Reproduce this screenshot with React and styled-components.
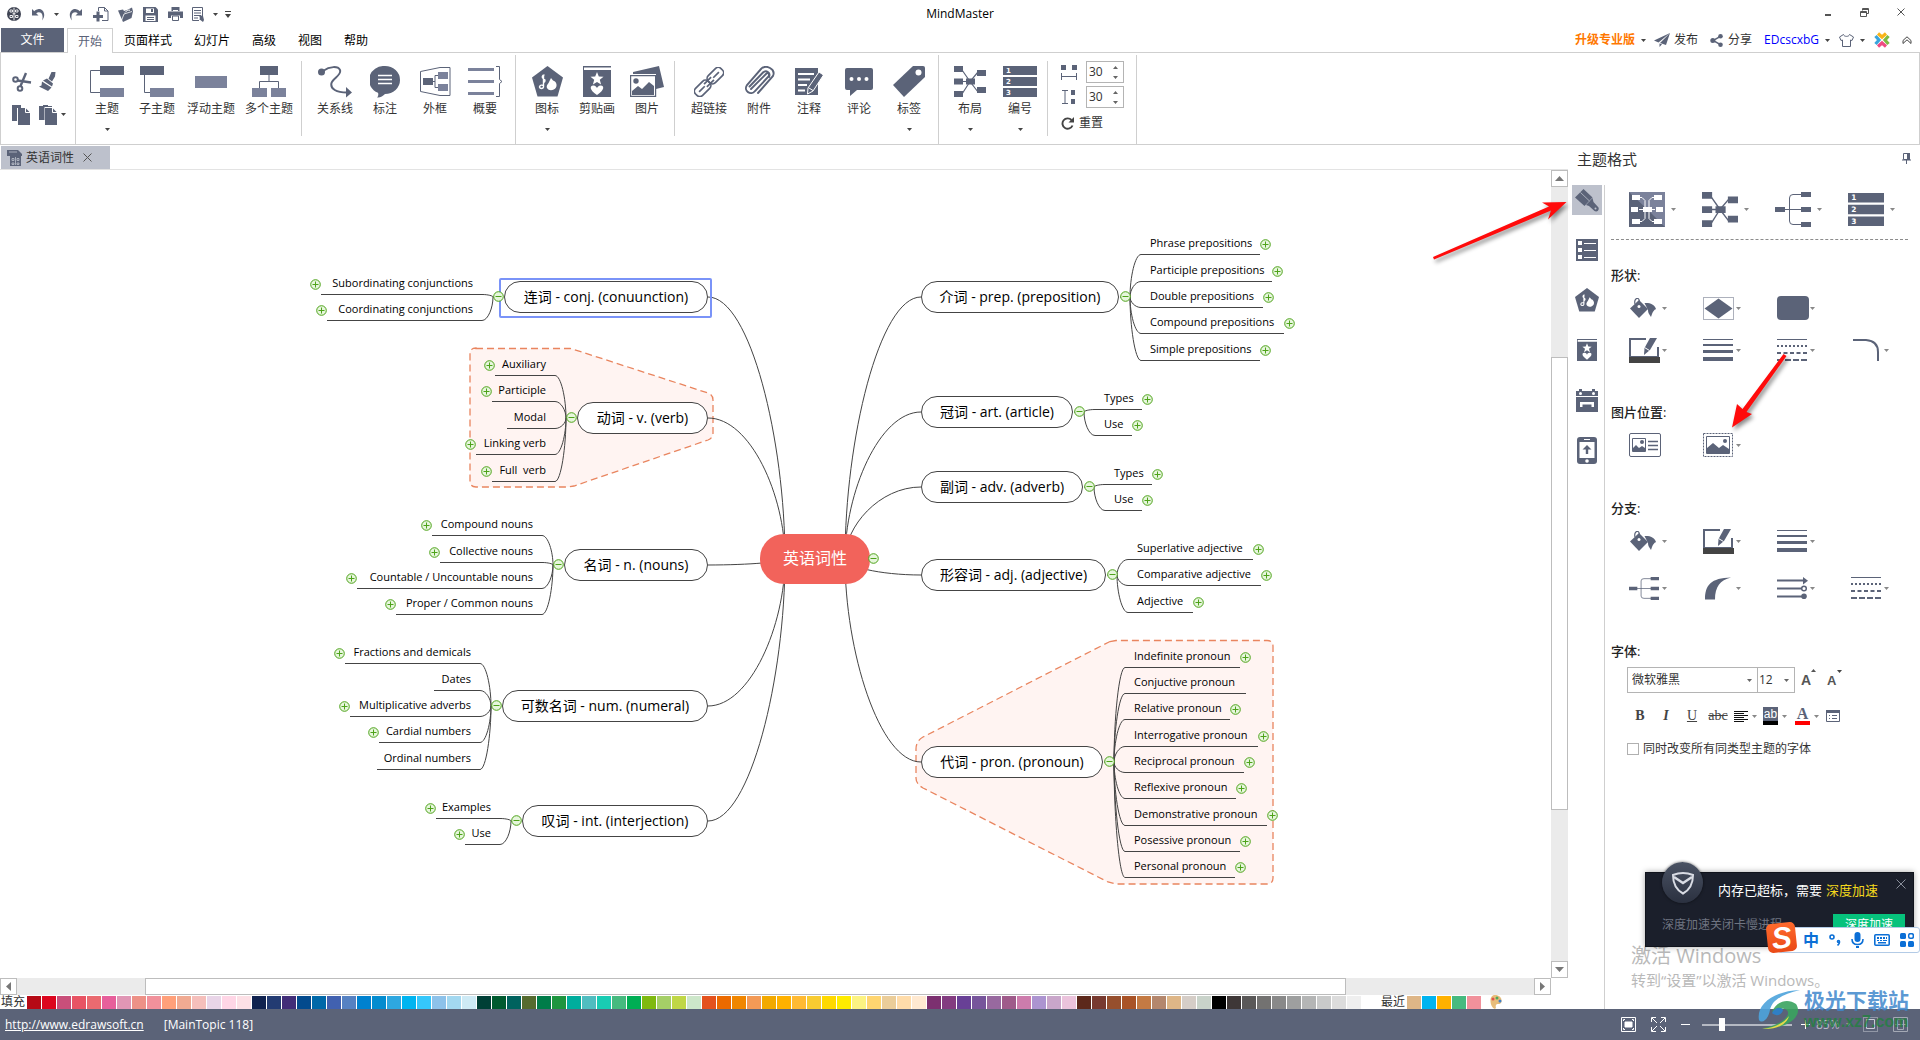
import React, { useState } from 'react';
import styled, { createGlobalStyle, css } from 'styled-components';

const DARK = '#5b6378';
const LIGHT = '#7b829b';
const LINE = '#cfcfcf';
const INK = '#444444';

const GlobalStyle = createGlobalStyle`
  * { box-sizing: border-box; }
  body {
    margin: 0;
    background: #fff;
    color: #333;
    font-family: "Open Sans", "Noto Sans CJK SC", sans-serif;
    font-size: 12px;
    line-height: 16px;
  }
  button, input, select { font: inherit; color: inherit; }
  svg { display: block; flex: none; }
`

const plainButton = css`
  border: 0;
  padding: 0;
  margin: 0;
  background: none;
  cursor: default;
`

const Page = styled.div`
  position: relative;
  display: flex;
  flex-direction: column;
  min-height: 100vh;
  overflow: hidden;
`

const IconButton = styled.button`
  ${plainButton}
  display: flex;
  align-items: center;
  justify-content: center;
  gap: ${p => p.$gap || 0}px;
  width: ${p => p.$w ? p.$w + 'px' : 'auto'};
  height: ${p => p.$h || 20}px;
`

/* ---------- title bar ---------- */

const TitleBar = styled.header`
  display: grid;
  grid-template-columns: 1fr auto 1fr;
  align-items: center;
  height: 28px;
  color: #000;
`

const QuickAccess = styled.div`
  display: flex;
  align-items: center;
  padding-left: 2px;
`

const WindowButtons = styled.div`
  display: flex;
  justify-content: flex-end;
  padding-bottom: 4px;
`

/* ---------- tabs ---------- */

const TabRow = styled.nav`
  display: flex;
  align-items: stretch;
  height: 24px;
  padding-left: 1px;
`

const FileTab = styled.button`
  ${plainButton}
  width: 63px;
  margin-right: 3px;
  background: ${DARK};
  color: #fff;
`

const Tab = styled.button`
  ${plainButton}
  padding: 2px ${p => p.$active ? 10 : 11}px 0;
  color: ${p => p.$active ? DARK : '#000'};
  ${p => p.$active && css`
    position: relative;
    z-index: 1;
    margin-bottom: -1px;
    background: #fff;
    border: 1px solid ${LINE};
    border-bottom: 0;
  `}
`

const AccountBar = styled.div`
  display: flex;
  align-items: center;
  margin-left: auto;
  padding-right: 6px;
`

const Account = styled.button`
  ${plainButton}
  display: flex;
  align-items: center;
  gap: ${p => p.$gap || 6}px;
  margin-right: ${p => p.$after || 0}px;
  color: ${p => p.$color || '#333'};
  font-weight: ${p => p.$bold ? 600 : 400};
`

/* ---------- ribbon ---------- */

const Ribbon = styled.div`
  display: flex;
  height: 93px;
  border: 1px solid ${LINE};
`

const Group = styled.div`
  display: flex;
  padding: 0 ${p => p.$pr || 4}px 0 ${p => p.$pl || 6}px;
  margin: ${p => p.$short ? 8 : 2}px 0 ${p => p.$short ? 8 : 0}px;
  border-right: 1px solid ${LINE};
`

const Clipboard = styled.div`
  display: grid;
  grid-template-columns: 27px 28px;
  grid-auto-rows: 33px;
  place-items: center start;
  width: 75px;
  padding: 10px 0 0 11px;
  margin-top: 2px;
  border-right: 1px solid ${LINE};
`

const BigButton = styled.button`
  ${plainButton}
  display: flex;
  flex-direction: column;
  align-items: center;
  width: ${p => p.$w || 50}px;
  margin-top: ${p => p.$short ? 3 : 9}px;
  span { line-height: 18px; margin: 3px 0 10px; }
`

const IconSlot = styled.div`
  display: flex;
  align-items: center;
  justify-content: center;
  height: 35px;
  margin-bottom: -2px;
`

const Spacing = styled.div`
  display: flex;
  flex-direction: column;
  gap: 3px;
  width: 88px;
  padding: 8px 0 0 13px;
`

const SpacingRow = styled.label`
  display: flex;
  align-items: center;
  justify-content: space-between;
  padding-right: 12px;
`

const ResetButton = styled.button`
  ${plainButton}
  display: flex;
  align-items: center;
  gap: 5px;
  margin-top: 4px;
`

const SpinBox = styled.span`
  display: flex;
  align-items: center;
  width: 38px;
  height: 22px;
  border: 1px solid #b4b4b4;
  input {
    width: 22px;
    padding: 0 0 0 2px;
    border: 0;
    outline: 0;
    background: none;
  }
`

const Divider = styled.div`
  width: 1px;
  margin-top: 2px;
  background: ${LINE};
`

/* ---------- work area ---------- */

const Main = styled.main`
  display: flex;
  flex: 1;
`

const Work = styled.div`
  display: flex;
  flex-direction: column;
  flex: 1;
  min-width: 0;
`

const DocTabs = styled.div`
  display: flex;
  height: 25px;
  padding: 1px 0 0 1px;
  border-bottom: 1px solid #e3e3e3;
`

const DocTab = styled.div`
  display: flex;
  align-items: center;
  gap: 3px;
  width: 109px;
  padding-left: 6px;
  background: #bdc1cc;
  button { ${plainButton} margin-left: 6px; }
`

const CanvasRow = styled.div`
  display: flex;
  flex: 1;
`

const Canvas = styled.section`
  position: relative;
  flex: 1;
  min-height: 760px;
  overflow: hidden;
  color: #000;
`

const Links = styled.svg`
  position: absolute;
  inset: 0;
`

const Topic = styled.div`
  position: absolute;
  left: ${p => p.$x}px;
  top: ${p => p.$y}px;
  width: ${p => p.$w}px;
  height: 32px;
  border: 1px solid ${INK};
  border-radius: 16px;
  background: #fff;
  font-size: 14px;
  line-height: 29px;
  text-align: center;
  white-space: nowrap;
  ${p => p.$selected && css`
    &::before {
      content: '';
      position: absolute;
      inset: -4px -5px -6px -6px;
      border: 2px solid #7a93f8;
      border-radius: 2px;
    }
  `}
`

const Root = styled.div`
  position: absolute;
  left: 760px;
  top: 364px;
  width: 110px;
  height: 50px;
  border-radius: 24px;
  background: #f2635b;
  color: #fff;
  font-size: 16px;
  line-height: 48px;
  text-align: center;
`

const Leaf = styled.div`
  position: absolute;
  left: ${p => p.$left ? p.$x - 220 : p.$x}px;
  top: ${p => p.$y - 20}px;
  width: 220px;
  line-height: 18px;
  font-size: 11px;
  text-align: ${p => p.$left ? 'right' : 'left'};
  white-space: pre;
`

const Toggle = styled.button`
  ${plainButton}
  position: absolute;
  left: ${p => p.$x - 5}px;
  top: ${p => p.$y - 5}px;
  width: 11px;
  height: 11px;
`

const VScroll = styled.div`
  display: flex;
  flex-direction: column;
  width: 17px;
  background: #ebebeb;
`

const HScroll = styled.div`
  display: flex;
  height: 17px;
  margin-right: 17px;
  background: #ebebeb;
`

const ScrollButton = styled.button`
  ${plainButton}
  display: flex;
  align-items: center;
  justify-content: center;
  width: 17px;
  height: 17px;
  border: 1px solid #bdbdbd;
  background: #fff;
`

const Track = styled.div`
  flex: ${p => p.$size};
`

const Thumb = styled.div`
  flex: ${p => p.$size};
  border: 1px solid #bdbdbd;
  background: #fff;
`

const PaletteBar = styled.div`
  display: flex;
  align-items: center;
  height: 14px;
  padding-left: 1px;
  line-height: 14px;
`

const PaletteLabel = styled.span`
  width: 26px;
  margin-left: ${p => p.$before || 0}px;
  white-space: nowrap;
`

const Swatch = styled.button`
  ${plainButton}
  width: 14px;
  height: 13px;
  margin-right: 1px;
  background: ${p => p.$color};
`

/* ---------- format panel ---------- */

const Panel = styled.aside`
  display: flex;
  flex-direction: column;
  width: 352px;
`

const PanelTitle = styled.div`
  display: flex;
  align-items: center;
  justify-content: space-between;
  height: 27px;
  margin-bottom: 13px;
  padding: 0 9px;
  font-size: 15px;
`

const PanelMain = styled.div`
  display: flex;
  flex: 1;
`

const SideTabs = styled.div`
  display: flex;
  flex: none;
  flex-direction: column;
  gap: 20px;
  width: 37px;
  padding-left: 4px;
  border-right: 1px solid ${LINE};
`

const SideTab = styled.button`
  ${plainButton}
  display: flex;
  align-items: center;
  justify-content: center;
  width: 30px;
  height: 30px;
  background: ${p => p.$active ? '#bdc1cc' : 'none'};
`

const Sections = styled.div`
  flex: 1;
  min-width: 0;
  padding: 0 12px 0 6px;
`

const StyleRow = styled.div`
  display: flex;
  align-items: flex-start;
  gap: 26px;
  height: 55px;
  padding: 7px 0 0 18px;
  border-bottom: 1px dashed #8c8c8c;
`

const Heading = styled.h3`
  margin: ${p => p.$top}px 0 0;
  height: 21px;
  font-size: 13px;
  font-weight: 500;
  line-height: 19px;
  color: #222;
`

const Tools = styled.div`
  display: grid;
  grid-template-columns: repeat(4, 74px);
  grid-auto-rows: 42px;
  row-gap: ${p => p.$gap || 0}px;
  padding-left: 18px;
`

const Tool = styled.button`
  ${plainButton}
  display: flex;
  flex: none;
  align-items: center;
  justify-content: space-between;
  width: ${p => p.$w || 38}px;
`

const FontRow = styled.div`
  display: flex;
  align-items: center;
  margin-top: 4px;
  padding-left: 16px;
`

const SelectBox = styled.span`
  display: flex;
  align-items: center;
  width: ${p => p.$w}px;
  height: 26px;
  padding-right: 5px;
  margin-right: -1px;
  border: 1px solid #b4b4b4;
  select {
    flex: 1;
    min-width: 0;
    padding-left: ${p => p.$pad}px;
    appearance: none;
    border: 0;
    outline: 0;
    background: none;
  }
`

const Letter = styled.button`
  ${plainButton}
  position: relative;
  width: 26px;
  margin-left: ${p => p.$first ? 7 : 0}px;
  text-align: left;
  font: bold ${p => p.$size}px "Liberation Sans", sans-serif;
  color: #555;
  svg { position: absolute; left: 10px; top: -3px; }
`

const FormatRow = styled.div`
  display: flex;
  align-items: center;
  height: 24px;
  margin-top: 11px;
  padding-left: 16px;
  color: #444;
`

const FormatButton = styled.button`
  ${plainButton}
  display: flex;
  align-items: center;
  justify-content: center;
  gap: 4px;
  width: ${p => p.$w || 26}px;
  height: 24px;
  font-family: "Liberation Serif", serif;
  font-size: 14px;
  font-weight: ${p => p.$bold ? 700 : 400};
  font-style: ${p => p.$italic ? 'italic' : 'normal'};
  text-decoration: ${p => p.$line || 'none'};
`

const ColorLetter = styled.span`
  width: 15px;
  height: 18px;
  border-bottom: 4px solid ${p => p.$color};
  background: ${p => p.$fill || 'none'};
  color: ${p => p.$fill ? '#fff' : DARK};
  font: ${p => p.$fill ? '12px "Liberation Sans"' : 'bold 16px "Liberation Serif"'}, sans-serif;
  line-height: 14px;
  text-align: center;
`

const CheckLabel = styled.label`
  display: flex;
  align-items: center;
  gap: 4px;
  margin-top: 13px;
  padding-left: 16px;
  input {
    appearance: none;
    width: 12px;
    height: 12px;
    margin: 0;
    border: 1px solid #b0b0b0;
    background: #fff;
  }
`

/* ---------- status bar ---------- */

const StatusBar = styled.footer`
  display: flex;
  align-items: center;
  height: 31px;
  padding: 0 5px;
  background: ${DARK};
  color: #fff;
  a { color: #fff; margin-right: 20px; }
`

const ZoomTools = styled.div`
  display: flex;
  align-items: center;
  margin-left: auto;
  span { width: 25px; margin-left: 6px; color: #b9bdc8; }
`

const Slider = styled.input`
  appearance: none;
  width: 90px;
  height: 14px;
  margin: 0 8px 0 5px;
  background: linear-gradient(#b5b9c3, #b5b9c3) center / 100% 2px no-repeat;
  &::-webkit-slider-thumb {
    appearance: none;
    width: 6px;
    height: 13px;
    background: #fff;
  }
`

/* ---------- floating windows ---------- */

const Pointer = styled.svg`
  position: absolute;
  top: ${p => p.$top}px;
  right: ${p => p.$right}px;
  filter: drop-shadow(2px 3px 2px rgba(0, 0, 0, 0.45));
`

const Activation = styled.div`
  position: absolute;
  right: 92px;
  bottom: 48px;
  width: 197px;
  color: #b9b9b9;
  white-space: nowrap;
  font-size: 15px;
  line-height: 24px;
  strong { display: block; font-weight: 400; font-size: 20px; }
`

const Notice = styled.div`
  position: absolute;
  right: 6px;
  bottom: 93px;
  width: 269px;
  height: 75px;
  padding: 8px 7px 0 16px;
  background: #1b1f2b;
  border: 1px solid #10131c;
  box-shadow: 0 0 6px rgba(0, 0, 0, 0.35);
  color: #fff;
`

const Badge = styled.div`
  position: absolute;
  left: 16px;
  top: -11px;
  display: flex;
  align-items: center;
  justify-content: center;
  width: 41px;
  height: 41px;
  border-radius: 50%;
  background: linear-gradient(#4a5263, #2b3140);
  box-shadow: 0 0 3px rgba(0, 0, 0, 0.6);
`

const NoticeTitle = styled.div`
  display: flex;
  gap: 4px;
  padding-left: 56px;
  font-size: 13px;
  line-height: 18px;
  em { font-style: normal; color: #f4d91c; }
  button { ${plainButton} margin: -12px 0 0 auto; }
`

const NoticeRow = styled.div`
  display: flex;
  justify-content: space-between;
  margin-top: 15px;
  color: #6f7481;
  line-height: 22px;
  button {
    ${plainButton}
    width: 72px;
    height: 22px;
    margin-right: 1px;
    background: #06c27c;
    color: #fff;
  }
`

const InputBar = styled.div`
  position: absolute;
  right: 0;
  bottom: 87px;
  display: flex;
  align-items: center;
  justify-content: space-between;
  width: 142px;
  height: 26px;
  padding: 0 5px 0 24px;
  border: 1px solid #b3cbe6;
  border-radius: 3px;
  background: #fff;
  color: #0b6fd6;
  font-size: 16px;
  font-weight: 700;
  line-height: 22px;
`

const InputLogo = styled.div`
  position: absolute;
  left: -12px;
  top: -5px;
  width: 29px;
  height: 29px;
  border-radius: 5px;
  background: linear-gradient(#ff6a2c, #ea4a17);
  color: #fff;
  font: italic bold 30px/29px "Liberation Sans", sans-serif;
  text-align: center;
  rotate: -6deg;
`

const SiteMark = styled.div`
  position: absolute;
  right: 12px;
  bottom: 8px;
  display: flex;
  align-items: center;
  gap: 2px;
  font-weight: 700;
  font-size: 21px;
  line-height: 24px;
  color: rgba(62, 135, 204, 0.85);
  white-space: nowrap;
  div { width: 104px; }
  small {
    display: block;
    font: bold 16px/20px "Liberation Sans", sans-serif;
    color: rgba(30, 130, 60, 0.75);
  }
`

/* ---------- icons ---------- */

const Icon = ({ w, h, children, ...rest }) => (
  <svg width={w} height={h} viewBox={`0 0 ${w} ${h}`} fill={DARK} stroke="none" aria-hidden="true" {...rest}>{children}</svg>
);

const Caret = ({ color = '#444' }) => <Icon w={5} h={3} fill={color}><path d="M0 0h5L2.500 3z" /></Icon>;

const CaretUp = () => <Icon w={5} h={3} fill="#555"><path d="M0 3h5L2.500 0z" /></Icon>;

const LogoIcon = () => (
  <Icon w={16} h={16} fill="#3f4453">
    <circle cx="8" cy="8" r="7" />
    <path d="M4 4h2.500v2H4zM9.500 4H12v2H9.500zM4 9.500h2.500v2H4zM9.500 9.500H12v2H9.500z" fill="none" stroke="#fff" strokeWidth=".9" />
    <path d="M6.500 7.800h3M8 1.500v13" stroke="#fff" strokeWidth=".9" />
  </Icon>
);

const UndoIcon = ({ flip }) => (
  <Icon w={14} h={13}>
    <g transform={flip ? 'translate(14 0) scale(-1 1)' : undefined}>
      <path d="M0 1v6.500h6.500L4.200 5.200C7.500 3 12.300 5 10 12.500 14.800 7 11 .2 6 1.200 4.500 1.500 3 2.300 2.300 3.200z" />
    </g>
  </Icon>
);

const NewIcon = () => (
  <Icon w={16} h={16}>
    <path d="M5.500 5V1.500h6l3.500 3.500v9.500H9M11.500 1.500V5H15" fill="none" stroke={DARK} />
    <path d="M3.500 5.500h3V9H10v3H6.500v3.500h-3V12H0V9h3.500z" />
  </Icon>
);

const OpenIcon = () => (
  <Icon w={15} h={15}>
    <path d="M0 3.500l5-1 1 1.500 3-1 5-2.500 1 4-1.500 6.500L5 15z" />
    <path d="M3.500 13.500L6 7l8-2.500" stroke="#fff" strokeWidth=".8" fill="none" /><path d="M7 5.500c1.500-2 3-2.500 5-2.300" stroke="#fff" fill="none" />
  </Icon>
);

const SaveIcon = () => (
  <Icon w={15} h={15}>
    <path d="M0 0h12.500L15 2.500V15H0z" /><path d="M3 1.500h8V6H3zM2.500 8.500h10v5.500h-10z" fill="#fff" /><path d="M8 2h2v3H8zM4 10h7v1H4zM4 12h7v1H4z" />
  </Icon>
);

const PrintIcon = () => (
  <Icon w={15} h={14}>
    <path d="M3.500 0h8v4h-8zM0 4.500h15V11h-3V8.500H3V11H0z" /><path d="M4.500 9h6v4.500h-6z" fill="#fff" stroke={DARK} /><path d="M5 3h5v1H5z" fill="#fff" />
  </Icon>
);

const PageIcon = () => (
  <Icon w={14} h={15}>
    <path d="M.5.500h10v9M7 13.500H.500V.500" fill="none" stroke={DARK} /><path d="M2 3h7v1H2zM2 5.500h7v1H2zM2 8h7v1H2zM2 10.500h4v1H2z" />
    <path d="M7 8l4 1 1 4-1 2-4-3 1-.5z" />
  </Icon>
);

const ScissorsIcon = () => (
  <Icon w={20} h={20} fill="none" stroke={DARK} strokeWidth="2">
    <circle cx="3.500" cy="7.500" r="2.300" /><circle cx="8" cy="16.500" r="2.300" />
    <path d="M5.500 8.500L19 10.500M8.500 14L14 1" strokeWidth="2.400" />
  </Icon>
);

const BrushIcon = () => (
  <Icon w={17} h={19}>
    <path d="M12.500 0h4l-.5 4.500-3 5-3.500-2.800zM4 8.500l4-2 6 5-1 3z" /><path d="M3 9.500l9.500 6-3.500 3.500-9-4.500 2.500-1z" />
  </Icon>
);

const CopyIcon = () => (
  <Icon w={18} h={20}>
    <path d="M0 0h9v3H5v13H0z" /><path d="M6 3h7.500L18 7.500V20H6z" /><path d="M13.500 3v4.500H18" fill="none" stroke="#fff" />
  </Icon>
);

const PasteIcon = () => (
  <Icon w={18} h={20}>
    <path d="M0 1h4V0h5v1h4v1H5.500v13H0z" /><path d="M6 3h7.500L18 7.500V20H6z" /><path d="M13.500 3v4.500H18" fill="none" stroke="#fff" />
  </Icon>
);

const ThemeIcon = () => (
  <Icon w={34} h={31}><path d="M10 4.500H.5v22H10" fill="none" stroke={DARK} /><path d="M10 0h24v9H10z" /><path d="M10 22h24v9H10z" fill={LIGHT} /></Icon>
);

const SubThemeIcon = () => (
  <Icon w={34} h={31}><path d="M0 0h24v9H0z" /><path d="M4.500 9v17.500H11" fill="none" stroke={DARK} /><path d="M10 22h24v9H10z" fill={LIGHT} /></Icon>
);

const FloatIcon = () => <Icon w={32} h={12}><path d="M0 0h32v12H0z" fill={LIGHT} /></Icon>;

const MultiIcon = () => (
  <Icon w={34} h={31}>
    <path d="M8 0h18v9H8z" /><path d="M17 9v6M7.500 22v-6.500h19V22" fill="none" stroke={DARK} /><path d="M0 22h15v9H0zM19 22h15v9H19z" fill={LIGHT} />
  </Icon>
);

const RelationIcon = () => (
  <Icon w={34} h={32}>
    <circle cx="3.500" cy="6" r="3.500" /><path d="M28 21v10.500l6-5z" />
    <path d="M5 5C12 0 20 0 22 4c2 5-7 8-8.500 13-1.500 6 5 9.500 15.500 9.500" fill="none" stroke={DARK} strokeWidth="2" />
  </Icon>
);

const CalloutIcon = () => (
  <Icon w={30} h={32}>
    <path d="M15 0a15 14 0 0 1 0 28c-2 2-5 4-8 3.500 1.500-1.500 1.500-3.500 1-4.700A15 14 0 0 1 15 0z" />
    <path d="M8 9.500h14M8 13.500h14M8 17.500h14" stroke="#fff" strokeWidth="1.500" />
  </Icon>
);

const BoundaryIcon = () => (
  <Icon w={31} h={31}>
    <path d="M.5 5.500L20 1.500h10v28H20L.500 25.500z" fill="none" stroke={DARK} />
    <path d="M3 12h10v7H3z" /><path d="M13 15.500h2M18 9.500h-3v12h3" fill="none" stroke={DARK} /><path d="M18 6h10v7H18zM18 18h10v7H18z" fill={LIGHT} />
  </Icon>
);

const SummaryIcon = () => (
  <Icon w={35} h={31}>
    <path d="M0 2h26v3H0zM0 14h26v3H0zM0 26h26v3H0z" fill={LIGHT} /><path d="M28 .5h3.500v13l2.500 2-2.500 2v13H28" fill="none" stroke={DARK} />
  </Icon>
);

const PentagonIcon = ({ size = 31 }) => (
  <svg width={size} height={size} viewBox="0 0 31 31" fill={DARK} aria-hidden="true">
    <path d="M15.500 0L31 11.500 25.500 30.500H5.500L0 11.500z" />
    <path d="M12.500 9c-2.500 0-3 2.500-1 3.500s2 3.500 0 4M11.500 9v12c-.5 2-3.500 2-4 0 .5-2.500 2.500-2 4-1.500" fill="none" stroke="#fff" strokeWidth="1.400" />
    <path d="M17.500 15l1.500-3 2 2.500c3 1 4.500 4 3 7-2 3-7 4-9 .5-1-3 1.500-4 2.500-7z" fill="#fff" />
  </svg>
);

const ClipartIcon = ({ w = 28, h = 31 }) => (
  <svg width={w} height={h} viewBox="0 0 28 31" fill={DARK} aria-hidden="true">
    <path d="M0 0h28v1.500H1V4h27v27H0z" />
    <path d="M14 6l1.800 4.500 4.700.3-3.700 3 1.300 4.700-4.100-2.600-4.100 2.600 1.300-4.700-3.700-3 4.700-.3z" fill="#fff" />
    <path d="M14 29c-9-6-6.500-10-3.500-9.500 2 0 3 1.500 3.500 2.500.5-1 1.500-2.500 3.500-2.500C20.500 19 23 23 14 29z" fill="#fff" />
  </svg>
);

const PictureIcon = () => (
  <Icon w={34} h={31}>
    <path d="M3 6L29 0l5 21-8 2V8H3z" /><path d="M.6 9.600h25v20.800H.600z" fill="#fff" stroke={DARK} strokeWidth="1.200" />
    <circle cx="6" cy="15" r="2.700" /><path d="M2 29v-4l6-5 4 3 7-7 5 4v9z" />
  </Icon>
);

const LinkIcon = () => (
  <Icon w={30} h={30} fill="none" stroke={DARK} strokeWidth="1.700">
    <g transform="rotate(-45 15 15)">
      <rect x="-3" y="10" width="18" height="10" rx="4" /><rect x="15" y="10" width="18" height="10" rx="4" />
      <path d="M1 15h8M10 13h10M10 17h10M21 15h8" />
    </g>
  </Icon>
);

const ClipIcon = () => (
  <Icon w={32} h={31} fill="none" stroke={DARK} strokeWidth="1.900" strokeLinecap="round">
    <path d="M8 23L23 8c2-2 4 0 2.500 2.500L12 25c-4 5-12 0-8-6L18 3c5-5 15 0 12 7L15 27M25.500 10.500" />
    <path d="M6.500 20.500L20 6.500c3-3 8 0 6 4.500" />
  </Icon>
);

const NoteIcon = () => (
  <Icon w={28} h={30}>
    <path d="M0 1h23v27H0z" /><path d="M3 7h16M3 12.500h12M3 18h9M3 23.500h7" stroke="#fff" strokeWidth="2" />
    <path d="M24 5l4.500 3L18 24l-5.500 3 .5-6z" stroke="#fff" /><path d="M14 21l4 2.500" stroke="#fff" />
  </Icon>
);

const CommentIcon = () => (
  <Icon w={28} h={28}>
    <path d="M2 0h24a2 2 0 0 1 2 2v18a2 2 0 0 1-2 2H12l-7 6v-6H2a2 2 0 0 1-2-2V2a2 2 0 0 1 2-2z" />
    <g fill="#fff"><circle cx="6.500" cy="11" r="2" /><circle cx="14" cy="11" r="2" /><circle cx="21.500" cy="11" r="2" /></g>
  </Icon>
);

const TagIcon = () => (
  <Icon w={32} h={31}><path d="M20 0h10a2 2 0 0 1 2 2v9L11 31 0 19z" /><circle cx="25.500" cy="6.500" r="3" fill="#fff" /></Icon>
);

const LayoutIcon = ({ w = 32, h = 31 }) => (
  <svg width={w} height={h} viewBox="0 0 32 31" fill={DARK} aria-hidden="true">
    <path d="M8 4l8 11.500L24 26M8 28l8-12.500L24 6M8 15.500h8" stroke={DARK} strokeWidth="1.200" fill="none" />
    <path d="M0 0h9v6H0zM0 12.500h9v6H0zM0 25h9v6H0zM23 4h9v6h-9zM23 21h9v6h-9zM12 12.500h9v6h-9z" />
  </svg>
);

const NumberIcon = ({ w = 34 }) => (
  <svg width={w} height={w === 34 ? 31 : 35} viewBox="0 0 34 31" fill={DARK} aria-hidden="true">
    <path d="M0 0h34v9H0zM0 11h34v9H0zM0 22h34v9H0z" />
    <g fill="#fff" fontSize="7" fontWeight="700" fontFamily="DejaVu Sans, sans-serif">
      <text x="3" y="7">1</text><text x="3" y="18">2</text><text x="3" y="29">3</text>
    </g>
  </svg>
);

const HSpaceIcon = () => (
  <Icon w={16} h={15}><path d="M0 0h5v5H0zM11 0h5v5h-5z" /><path d="M.5 8v7M15.500 8v7M1 11.500h14" stroke={DARK} /></Icon>
);

const VSpaceIcon = () => (
  <Icon w={16} h={15}><path d="M10 0h4v5h-4zM10 9h4v5h-4z" /><path d="M1 .5h6M1 13.500h6M4 1v12" stroke={DARK} /></Icon>
);

const ResetIcon = () => (
  <Icon w={13} h={13}><path d="M10.500 3A5.200 5.200 0 1 0 11.500 8.500" fill="none" stroke="#444" strokeWidth="1.900" /><path d="M13 0v5.500H7.500z" fill="#444" /></Icon>
);

const PlaneIcon = () => (
  <Icon w={16} h={14}><path d="M16 0L0 7.500l4.500 2zM16 0L6 10l6 2z" /><path d="M5.500 10.500V14l2.500-2.800z" /></Icon>
);

const ShareIcon = () => (
  <Icon w={13} h={13}><circle cx="2.800" cy="6.500" r="2.500" /><circle cx="10.500" cy="2.300" r="2.300" /><circle cx="10.500" cy="10.700" r="2.300" /><path d="M10.500 2.300L3 6.500l7.500 4.200" fill="none" stroke={DARK} strokeWidth="1.500" /></Icon>
);

const ShirtIcon = () => (
  <Icon w={15} h={13}><path d="M4.500.5C5 3 10 3 10.500.500L14.500 3 13 6.500l-1.500-.5v6.500h-8V6L2 6.500.500 3z" fill="none" stroke={DARK} /></Icon>
);

const FlowerIcon = () => (
  <Icon w={16} h={16} fill="none" strokeWidth="3.200">
    <path d="M4 1.500l4 3.500 4-3.500" stroke="#f9b418" /><path d="M14.500 4L11 8l3.500 4" stroke="#7dbb42" />
    <path d="M12 14.500L8 11l-4 3.500" stroke="#ee4b82" /><path d="M1.500 12L5 8 1.500 4" stroke="#3aa5dc" />
  </Icon>
);

const CollapseIcon = () => (
  <Icon w={10} h={8} fill="none" stroke="#444"><path d="M1 4.500L5 .8l4 3.700M1 7.500l4-3.700 4 3.700M1 4.500v3M9 4.500v3" /></Icon>
);

const DocIcon = () => (
  <Icon w={16} h={16}>
    <path d="M0 0h11l4 4v2H0zM3 6h11v10H3z" /><path d="M2 2h8M5 8.500h2v2H5zM10 8.500h2v2h-2zM5 13h2v1.500H5zM10 13h2v1.500h-2zM8.500 7v8" stroke="#bdc1cc" fill="none" strokeWidth=".8" />
  </Icon>
);

const CloseIcon = ({ size = 8, color = '#555' }) => (
  <Icon w={size} h={size} fill="none" stroke={color}><path d={`M.5.500L${size - 0.5} ${size - 0.5}M${size - 0.5}.500L.500 ${size - 0.5}`} /></Icon>
);

const PaintbrushIcon = () => (
  <Icon w={24} h={23}>
    <path d="M0 8.500L8.500 0l9 8.500-8 8.500z" /><path d="M11 16l6.500-7 1 4 5 5.500c1 2.500-1.500 5-4 3.500L14 17z" />
    <path d="M5.500 3.500l9 8.500" stroke="#bdc1cc" strokeWidth=".8" /><circle cx="20.500" cy="19.500" r="1" fill="#bdc1cc" />
  </Icon>
);

const ListIcon = () => (
  <Icon w={22} h={22}><path d="M0 0h22v22H0z" /><path d="M2 2h4v4H2zM2 9h4v4H2zM2 16h4v4H2z" fill="#fff" /><path d="M8 4.500h12M8 11.500h12M8 18.500h12" stroke="#fff" /></Icon>
);

const CalendarIcon = () => (
  <Icon w={22} h={23}><path d="M0 2h3V0h3v2h10V0h3v2h3v5H0zM0 8h22v15H0z" /><circle cx="4.500" cy="4.500" r="1.500" fill="#fff" /><circle cx="17.500" cy="4.500" r="1.500" fill="#fff" /><path d="M4 13h14v5h-2.500v-2.500h-9V18H4z" fill="#fff" /></Icon>
);

const PhoneIcon = () => (
  <Icon w={20} h={27}><rect width="20" height="27" rx="3" /><path d="M2.500 5h15v16h-15zM7 2h6v1H7z" fill="#fff" /><circle cx="10" cy="24" r="1.800" fill="#fff" /><path d="M10 8l4.500 4.500h-3.300V17H8.800v-4.500H5.500z" /></Icon>
);

const MapStyleIcon = () => (
  <Icon w={36} h={35}>
    <path d="M0 0h36v35H0z" /><path d="M0 0h36v35L18 17z" fill={LIGHT} />
    <path d="M10 5.500h3l3 3v18l-3 3h-3M26 5.500h-3l-3 3v18l3 3h3M10 17.500h16" fill="none" stroke="#fff" />
    <path d="M3 3h8v5H3zM2 15h7v5H2zM3 27h8v5H3zM25 3h8v5h-8zM27 15h7v5h-7zM25 27h8v5h-8zM14 15h9v5h-9z" fill="#fff" />
  </Icon>
);

const TreeIcon = ({ w = 36, h = 35 }) => (
  <svg width={w} height={h} viewBox="0 0 36 35" preserveAspectRatio="none" fill={DARK} aria-hidden="true">
    <path d="M27 2.500H18q-3.500 0-3.500 3.500v23q0 3.500 3.500 3.500h9M8 17.500h20" fill="none" stroke={DARK} />
    <path d="M0 15h10v5H0zM26 0h10v5H26zM26 15h10v5H26zM26 30h10v5H26z" />
  </svg>
);

const BucketIcon = () => (
  <Icon w={28} h={20}>
    <path d="M1 10.500L10 2l9 9-9 9z" /><path d="M6 6c-1-4 1-6 3-5.500 1.500.5 1.500 3 1.500 5" fill="none" stroke={DARK} strokeWidth="1.200" /><circle cx="10" cy="8.500" r="1.500" fill="#fff" />
    <path d="M15.500 5c5-.5 10 1 11.500 6-2 1-3 2-5 8-2-3-3-4-3-7z" />
  </Icon>
);

const DiamondIcon = () => (
  <Icon w={31} h={23}><path d="M.5.500h30v22H.500z" fill="none" stroke={DARK} strokeDasharray="1 1" /><path d="M15.500 1.500l14 10-14 10-14-10z" /></Icon>
);

const RoundRectIcon = () => <Icon w={32} h={24}><rect width="32" height="24" rx="4" /></Icon>;

const PenColorIcon = () => (
  <Icon w={31} h={25}>
    <path d="M17 1H1v18h28V9" fill="none" stroke={DARK} strokeWidth="2" /><path d="M0 19h31v6H0z" fill="#444" />
    <path d="M21 0h7l-7 12-6 5 .5-7z" /><path d="M15.500 9.500l5 3" stroke="#fff" />
  </Icon>
);

const WeightIcon = () => <Icon w={30} h={22}><path d="M0 0h30v1H0zM0 5h30v2H0zM0 11h30v3H0zM0 18h30v4H0z" /></Icon>;

const DashIcon = () => (
  <Icon w={30} h={22} stroke={DARK} strokeWidth="2">
    <path d="M0 .5h30" strokeWidth="1" /><path d="M0 7h30" strokeDasharray="2 2" /><path d="M0 14h30" strokeDasharray="4 2.500" /><path d="M0 21h30" strokeDasharray="6 2" />
  </Icon>
);

const CornerIcon = () => <Icon w={28} h={22}><path d="M2 1h13q12 1 12 12v9" fill="none" stroke={DARK} strokeWidth="2" /></Icon>;

const PicLeftIcon = () => (
  <Icon w={32} h={24}>
    <rect x=".5" y=".5" width="31" height="23" rx="1.500" fill="none" stroke={DARK} /><path d="M3.500 5.500h13v13h-13z" fill="none" stroke={DARK} />
    <circle cx="13" cy="9" r="2" /><path d="M4 18v-3l3-3 3 3 3-2 3 2v3z" /><path d="M19 8.500h10M19 12.500h10M19 16.500h10" stroke={DARK} strokeWidth="1.500" />
  </Icon>
);

const PicFrameIcon = () => (
  <Icon w={30} h={24}>
    <path d="M.5.500h29v23H.500z" fill="none" stroke={DARK} strokeDasharray="2 1" /><path d="M3.500 3.500h23v17h-23z" fill="none" stroke={DARK} />
    <circle cx="22" cy="8" r="2" /><path d="M4 20v-5l6-5 6 5 4-3 6 4v4z" />
  </Icon>
);

const HornIcon = () => <Icon w={28} h={23}><path d="M2 22.500C2 8 8 1 28 .5 17 3 12 10 12 22.500z" /></Icon>;

const EndsIcon = () => (
  <Icon w={31} h={22}>
    <path d="M0 3.500h26M0 11.500h25M0 19.500h25" stroke={DARK} strokeWidth="1.800" /><path d="M26 0v7.500l5-3.700z" />
    <circle cx="27" cy="11.500" r="2.300" fill="#fff" stroke={DARK} strokeWidth="1.500" /><circle cx="27" cy="19.200" r="2.800" />
  </Icon>
);

const AlignIcon = () => <Icon w={14} h={11} fill="#111"><path d="M0 0h14v1H0zM0 2h10v1H0zM0 4h14v1H0zM0 6h10v1H0zM0 8h14v1H0zM0 10h10v1H0z" /></Icon>;

const BulletBoxIcon = () => (
  <Icon w={14} h={12}><path d="M.5 1.500h13v10H.500z" fill="none" stroke={DARK} /><path d="M0 0h14v3H0zM3 5h1v1H3zM3 8h1v1H3zM6 5h5v1H6zM6 8h5v1H6z" /></Icon>
);

const PinIcon = () => <Icon w={9} h={11}><path d="M1.500.5h6v6h-6z" fill="none" stroke={DARK} /><path d="M5 0h3v7H5zM0 6.500h9v1H0zM4 7h1v4H4z" /></Icon>;

const PaletteIcon = () => (
  <Icon w={14} h={14}>
    <path d="M6 0c5 0 8 4 6 8-2 2-4 0-5 2s1 3-1 4C1 13-1 0 6 0z" fill="#e8bd7a" /><circle cx="4" cy="4" r="1.500" fill="#e0524d" /><circle cx="8" cy="3" r="1.500" fill="#4fa85a" /><circle cx="11" cy="6" r="1.500" fill="#3d7fc9" />
  </Icon>
);

const ShieldIcon = () => (
  <Icon w={24} h={24} fill="none" stroke="#d9dce4" strokeWidth="2">
    <path d="M2 4Q12 0 22 4 22 17 12 22.500 2 17 2 4z" /><path d="M3 6l9 6 9-6" strokeWidth="2.400" />
  </Icon>
);

/* ---------- data ---------- */

const colors = [
  '#b60a16', '#dc061e', '#c94f7a', '#e85464', '#ea6a70', '#e75f9b', '#e096b5', '#ed9187', '#f1919b', '#ffa07a',
  '#f0aa92', '#f5bfbb', '#e9d5e8', '#ffd6e6', '#fde0e6', '#10224f', '#233b72', '#422d78', '#034a8d', '#0068a8',
  '#4161b0', '#5681c2', '#0081cf', '#048ccf', '#2ea7e0', '#00b4f0', '#35c7fb', '#8dc2ea', '#a3d8f0', '#ceeaf5',
  '#003f36', '#005a2f', '#00625e', '#566b2f', '#007c49', '#1e953f', '#00ad9d', '#50bdc0', '#19ccb3', '#46ba7f',
  '#00ae54', '#7fb910', '#a5cf67', '#c0d746', '#cde7ca', '#e4521e', '#ec6a00', '#f08600', '#f39a56', '#f2a900',
  '#ffb100', '#ffba33', '#f8cb31', '#ffd900', '#ffec00', '#fcf382', '#ffd570', '#ebcd99', '#ffdcaa', '#ffe9d1',
  '#7c3070', '#833c80', '#684096', '#77559b', '#98699f', '#9f5b8a', '#cd7cac', '#ac94d0', '#c9a6ca', '#ebc3dc',
  '#5c281b', '#783a30', '#964f2d', '#a95327', '#c47a43', '#b4876d', '#deb687', '#d5cdc7', '#c9d3ca', '#000000',
  '#3e3737', '#5a5858', '#737271', '#898989', '#9e9f9f', '#b4b5b5', '#c9caca', '#dcdcdc', '#efefef',
];

const recentColors = ['#deb687', '#00b4f0', '#ffb100', '#46ba7f', '#f1919b'];

// items: [label, far end of the underline, underline y, has children]
const topics = [
  { label: '连词 - conj. (conuunction)', left: true, x: 504, y: 111, w: 204, selected: true, items: [
    ['Subordinating conjunctions', 321, 124, 1], ['Coordinating conjunctions', 327, 150, 1]] },
  { label: '动词 - v. (verb)', left: true, x: 577, y: 232, w: 131, items: [
    ['Auxiliary', 495, 205, 1], ['Participle', 492, 231, 1], ['Modal', 507, 258, 0], ['Linking verb', 476, 284, 1], ['Full  verb', 492, 311, 1]] },
  { label: '名词 - n. (nouns)', left: true, x: 564, y: 379, w: 144, items: [
    ['Compound nouns', 432, 365, 1], ['Collective nouns', 440, 392, 1], ['Countable / Uncountable nouns', 357, 418, 1], ['Proper / Common nouns', 396, 444, 1]] },
  { label: '可数名词 - num. (numeral)', left: true, x: 502, y: 520, w: 206, items: [
    ['Fractions and demicals', 345, 493, 1], ['Dates', 434, 520, 0], ['Multiplicative adverbs', 350, 546, 1], ['Cardial numbers', 379, 572, 1], ['Ordinal numbers', 377, 599, 0]] },
  { label: '叹词 - int. (interjection)', left: true, x: 522, y: 635, w: 186, items: [
    ['Examples', 436, 648, 1], ['Use', 465, 674, 1]] },
  { label: '介词 - prep. (preposition)', x: 921, y: 111, w: 198, items: [
    ['Phrase prepositions', 1260, 84, 1], ['Participle prepositions', 1272, 111, 1], ['Double prepositions', 1263, 137, 1], ['Compound prepositions', 1284, 163, 1], ['Simple prepositions', 1260, 190, 1]] },
  { label: '冠词 - art. (article)', x: 921, y: 226, w: 152, items: [
    ['Types', 1142, 239, 1], ['Use', 1132, 265, 1]] },
  { label: '副词 - adv. (adverb)', x: 921, y: 301, w: 162, items: [
    ['Types', 1152, 314, 1], ['Use', 1142, 340, 1]] },
  { label: '形容词 - adj. (adjective)', x: 921, y: 389, w: 185, items: [
    ['Superlative adjective', 1253, 389, 1], ['Comparative adjective', 1261, 415, 1], ['Adjective', 1193, 442, 1]] },
  { label: '代词 - pron. (pronoun)', x: 921, y: 576, w: 182, items: [
    ['Indefinite pronoun', 1240, 497, 1], ['Conjuctive pronoun', 1246, 523, 0], ['Relative pronoun', 1230, 549, 1], ['Interrogative pronoun', 1258, 576, 1], ['Reciprocal pronoun', 1244, 602, 1],
    ['Reflexive pronoun', 1236, 628, 1], ['Demonstrative pronoun', 1267, 655, 1], ['Posessive pronoun', 1240, 681, 1], ['Personal pronoun', 1235, 707, 1]] },
];

const themeButtons = [
  { label: '主题', icon: <ThemeIcon />, menu: true },
  { label: '子主题', icon: <SubThemeIcon /> },
  { label: '浮动主题', icon: <FloatIcon />, w: 58 },
  { label: '多个主题', icon: <MultiIcon />, w: 58 },
];

const relationButtons = [
  { label: '关系线', icon: <RelationIcon /> },
  { label: '标注', icon: <CalloutIcon /> },
  { label: '外框', icon: <BoundaryIcon /> },
  { label: '概要', icon: <SummaryIcon /> },
];

const pictureButtons = [
  { label: '图标', icon: <PentagonIcon />, menu: true },
  { label: '剪贴画', icon: <ClipartIcon /> },
  { label: '图片', icon: <PictureIcon /> },
];

const attachButtons = [
  { label: '超链接', icon: <LinkIcon /> },
  { label: '附件', icon: <ClipIcon /> },
  { label: '注释', icon: <NoteIcon /> },
  { label: '评论', icon: <CommentIcon /> },
  { label: '标签', icon: <TagIcon />, menu: true },
];

const layoutButtons = [
  { label: '布局', icon: <LayoutIcon />, menu: true },
  { label: '编号', icon: <NumberIcon />, menu: true },
];

/* ---------- components ---------- */

function RibbonGroup({ buttons, short, pl, pr }) {
    return (
        <Group $short={short} $pl={pl} $pr={pr}>
            {buttons.map(b => (
                <BigButton key={b.label} $w={b.w} $short={short}>
                    <IconSlot>{b.icon}</IconSlot>
                    <span>{b.label}</span>
                    {b.menu && <Caret />}
                </BigButton>
            ))}
        </Group>
    );
}

function Spinner({ label, icon }) {
    const [value, setValue] = useState('30');

    return (
        <SpacingRow>
            {icon}
            <SpinBox>
                <input aria-label={label} value={value} onChange={(e) => setValue(e.target.value)} />
                <IconButton aria-label="step" $w={12}>
                    <Icon w={5} h={13} fill="#666"><path d="M0 3h5L2.500 0zM0 10h5l-2.500 3z" /></Icon>
                </IconButton>
            </SpinBox>
        </SpacingRow>
    );
}

function Mark({ x, y, plus }) {
    return (
        <Toggle $x={x} $y={y} aria-label={plus ? 'expand' : 'collapse'}>
            <Icon w={11} h={11} fill="#e6f6dc" stroke="#4ea31a">
                <circle cx="5.500" cy="5.500" r="4.800" /><path d={plus ? 'M2.500 5.500h6M5.500 2.500v6' : 'M2.500 5.500h6'} />
            </Icon>
        </Toggle>
    );
}

// quarter ellipse leaving (x0, y0) horizontally and reaching (x1, y1) vertically
const bend = (x0, y0, x1, y1) =>
    `C${x0 + (x1 - x0) * 0.55} ${y0} ${x1} ${y1 + (y0 - y1) * 0.45} ${x1} ${y1}`;

function geometry(t) {
    const dir = t.left ? -1 : 1;
    const mark = t.left ? t.x - 6 : t.x + t.w + 6;
    return { dir, mark, bus: mark + dir * 5, mid: t.y + 16 };
}

function MindMap() {
    return (
        <Canvas>
            <Links width="1400" height="760" fill="none" stroke={INK}>
                <g fill="#fff4f2" stroke="#e9855f" strokeDasharray="7 4" strokeWidth="1.300">
                    <path d="M476 178.500H570l4 1L708 223q5 2 5 7v33q0 5-5 7L574 316l-6 1H476q-6 0-6-6V184q0-6 6-6z" />
                    <path d="M1110 471.500l6-1H1267q6 0 6 6V708q0 6-6 6H1116l-8-2L923 618q-7-4-7-10V579q0-8 7-12z" />
                </g>
                {topics.map(t => {
                    const { dir, bus, mid } = geometry(t);
                    const edge = t.left ? t.x + t.w : t.x;
                    return (
                        <g key={t.label}>
                            <path d={`M${edge} ${mid}${bend(edge, mid, t.left ? 785 : 845, 389)}`} />
                            <path d={`M${bus} ${mid}H${bus - dir * 10}`} />
                            {t.items.map(([label, end, y]) => (
                                <path key={label} d={`M${end} ${y + 0.5}H${bus + dir * 11}${bend(bus + dir * 11, y + 0.5, bus, mid)}`} />
                            ))}
                        </g>
                    );
                })}
            </Links>
            {topics.map(t => {
                const { dir, mark, bus, mid } = geometry(t);
                return (
                    <React.Fragment key={t.label}>
                        <Topic $x={t.x} $y={t.y} $w={t.w} $selected={t.selected}>{t.label}</Topic>
                        <Mark x={mark} y={mid - 1} />
                        {t.items.map(([label, end, y, more]) => (
                            <React.Fragment key={label}>
                                <Leaf $left={t.left} $x={bus + dir * 20} $y={y}>{label}</Leaf>
                                {more ? <Mark x={t.left ? end - 6 : end + 5} y={y - 10} plus /> : null}
                            </React.Fragment>
                        ))}
                    </React.Fragment>
                );
            })}
            <Root>英语词性</Root>
            <Mark x={873} y={388} />
        </Canvas>
    );
}

function Header() {
    return (
        <>
            <TitleBar>
                <QuickAccess>
                    <IconButton $w={24}><LogoIcon /></IconButton>
                    <IconButton $w={38} $gap={8}><UndoIcon /><Caret /></IconButton>
                    <IconButton $w={22}><UndoIcon flip /></IconButton>
                    <IconButton $w={29}><NewIcon /></IconButton>
                    <IconButton $w={21}><OpenIcon /></IconButton>
                    <IconButton $w={29}><SaveIcon /></IconButton>
                    <IconButton $w={21}><PrintIcon /></IconButton>
                    <IconButton $w={38} $gap={7}><PageIcon /><Caret /></IconButton>
                    <IconButton $w={8}><Icon w={6} h={7} fill="#444"><path d="M0 0h6v1H0zM0 3h6L3 7z" /></Icon></IconButton>
                </QuickAccess>
                <div>MindMaster</div>
                <WindowButtons>
                    <IconButton $w={36} aria-label="minimize"><Icon w={6} h={8} fill="#555"><path d="M0 6h6v2H0z" /></Icon></IconButton>
                    <IconButton $w={36} aria-label="restore"><Icon w={9} h={9} fill="none" stroke="#555"><path d="M2.500 2.500v-2h6v5h-2M.500 3.500h6v5h-6zM.500 4.500h6M2.500 1.500h6" /></Icon></IconButton>
                    <IconButton $w={38} aria-label="close"><CloseIcon /></IconButton>
                </WindowButtons>
            </TitleBar>
            <TabRow>
                <FileTab>文件</FileTab>
                <Tab $active>开始</Tab>
                <Tab>页面样式</Tab>
                <Tab>幻灯片</Tab>
                <Tab>高级</Tab>
                <Tab>视图</Tab>
                <Tab>帮助</Tab>
                <AccountBar>
                    <Account $color="#ff7800" $bold $after={8}>升级专业版 <Caret /></Account>
                    <Account $gap={4} $after={12}><PlaneIcon />发布</Account>
                    <Account $gap={5} $after={12}><ShareIcon />分享</Account>
                    <Account $color="#0000ff" $after={9}>EDcscxbG <Caret /></Account>
                    <Account $after={9}><ShirtIcon /><Caret /></Account>
                    <Account $after={12}><FlowerIcon /></Account>
                    <Account $after={2}><CollapseIcon /></Account>
                </AccountBar>
            </TabRow>
            <Ribbon>
                <Clipboard>
                    <IconButton><ScissorsIcon /></IconButton>
                    <IconButton><BrushIcon /></IconButton>
                    <IconButton><CopyIcon /></IconButton>
                    <IconButton $gap={4}><PasteIcon /><Caret /></IconButton>
                </Clipboard>
                <RibbonGroup buttons={themeButtons} short pr={3} />
                <RibbonGroup buttons={relationButtons} pl={8} pr={5} />
                <RibbonGroup buttons={pictureButtons} short pr={2} />
                <RibbonGroup buttons={attachButtons} pl={9} />
                <RibbonGroup buttons={layoutButtons} short pr={2} />
                <Spacing>
                    <Spinner label="水平间距" icon={<HSpaceIcon />} />
                    <Spinner label="垂直间距" icon={<VSpaceIcon />} />
                    <ResetButton><ResetIcon />重置</ResetButton>
                </Spacing>
                <Divider />
            </Ribbon>
        </>
    );
}

function Workspace() {
    return (
        <Work>
            <DocTabs>
                <DocTab><DocIcon />英语词性<button aria-label="close"><CloseIcon size={9} /></button></DocTab>
            </DocTabs>
            <CanvasRow>
                <MindMap />
                <VScroll>
                    <ScrollButton aria-label="up"><Icon w={9} h={5} fill="#777"><path d="M0 5h9L4.500 0z" /></Icon></ScrollButton>
                    <Track $size={170} />
                    <Thumb $size={453} />
                    <Track $size={151} />
                    <ScrollButton aria-label="down"><Icon w={9} h={5} fill="#777"><path d="M0 0h9L4.500 5z" /></Icon></ScrollButton>
                </VScroll>
            </CanvasRow>
            <HScroll>
                <ScrollButton aria-label="left"><Icon w={5} h={9} fill="#777"><path d="M5 0v9L0 4.500z" /></Icon></ScrollButton>
                <Track $size={128} />
                <Thumb $size={1201} />
                <Track $size={188} />
                <ScrollButton aria-label="right"><Icon w={5} h={9} fill="#777"><path d="M0 0v9l5-4.500z" /></Icon></ScrollButton>
            </HScroll>
            <PaletteBar>
                <PaletteLabel>填充</PaletteLabel>
                {colors.map(c => <Swatch key={c} $color={c} aria-label={c} />)}
                <PaletteLabel $before={19}>最近</PaletteLabel>
                {recentColors.map(c => <Swatch key={c} $color={c} aria-label={c} />)}
                <IconButton $w={28} $h={14}><PaletteIcon /></IconButton>
            </PaletteBar>
        </Work>
    );
}

function ToolButton({ icon, w, menu = true }) {
    return <Tool $w={w}>{icon}{menu && <Caret color="#888" />}</Tool>;
}

function FormatPanel() {
    const [same, setSame] = useState(false);

    return (
        <Panel>
            <PanelTitle>主题格式<PinIcon /></PanelTitle>
            <PanelMain>
                <SideTabs>
                    <SideTab $active><PaintbrushIcon /></SideTab>
                    <SideTab><ListIcon /></SideTab>
                    <SideTab><PentagonIcon size={24} /></SideTab>
                    <SideTab><ClipartIcon w={20} h={24} /></SideTab>
                    <SideTab><CalendarIcon /></SideTab>
                    <SideTab><PhoneIcon /></SideTab>
                </SideTabs>
                <Sections>
                    <StyleRow>
                        <ToolButton w={47} icon={<MapStyleIcon />} />
                        <ToolButton w={47} icon={<LayoutIcon w={36} h={35} />} />
                        <ToolButton w={47} icon={<TreeIcon />} />
                        <ToolButton w={47} icon={<NumberIcon w={36} />} />
                    </StyleRow>
                    <Heading $top={26}>形状:</Heading>
                    <Tools>
                        <ToolButton icon={<BucketIcon />} />
                        <ToolButton icon={<DiamondIcon />} />
                        <ToolButton icon={<RoundRectIcon />} />
                        <span />
                        <ToolButton icon={<PenColorIcon />} />
                        <ToolButton icon={<WeightIcon />} />
                        <ToolButton icon={<DashIcon />} />
                        <ToolButton icon={<CornerIcon />} />
                    </Tools>
                    <Heading $top={32}>图片位置:</Heading>
                    <Tools>
                        <ToolButton icon={<PicLeftIcon />} menu={false} />
                        <ToolButton icon={<PicFrameIcon />} />
                    </Tools>
                    <Heading $top={33}>分支:</Heading>
                    <Tools $gap={5}>
                        <ToolButton icon={<BucketIcon />} />
                        <ToolButton icon={<PenColorIcon />} />
                        <ToolButton icon={<WeightIcon />} />
                        <span />
                        <ToolButton icon={<TreeIcon w={30} h={23} />} />
                        <ToolButton icon={<HornIcon />} />
                        <ToolButton icon={<EndsIcon />} />
                        <ToolButton icon={<DashIcon />} />
                    </Tools>
                    <Heading $top={33}>字体:</Heading>
                    <FontRow>
                        <SelectBox $w={131} $pad={4}>
                            <select aria-label="字体"><option>微软雅黑</option></select><Caret color="#666" />
                        </SelectBox>
                        <SelectBox $w={38} $pad={1}>
                            <select aria-label="字号"><option>12</option></select><Caret color="#666" />
                        </SelectBox>
                        <Letter $size={14} $first>A<CaretUp /></Letter>
                        <Letter $size={13}>A<Caret /></Letter>
                    </FontRow>
                    <FormatRow>
                        <FormatButton $bold>B</FormatButton>
                        <FormatButton $italic $bold>I</FormatButton>
                        <FormatButton $line="underline">U</FormatButton>
                        <FormatButton $line="line-through">abc</FormatButton>
                        <FormatButton $w={28}><AlignIcon /><Caret color="#888" /></FormatButton>
                        <FormatButton $w={32}><ColorLetter $color="#000" $fill={DARK}>ab</ColorLetter><Caret color="#888" /></FormatButton>
                        <FormatButton $w={32}><ColorLetter $color="#f00">A</ColorLetter><Caret color="#888" /></FormatButton>
                        <FormatButton $w={20}><BulletBoxIcon /></FormatButton>
                    </FormatRow>
                    <CheckLabel>
                        <input type="checkbox" checked={same} onChange={() => setSame(!same)} />
                        同时改变所有同类型主题的字体
                    </CheckLabel>
                </Sections>
            </PanelMain>
        </Panel>
    );
}

function Status() {
    const [zoom, setZoom] = useState(20);

    return (
        <StatusBar>
            <a href="http://www.edrawsoft.cn">http://www.edrawsoft.cn</a>
            [MainTopic 118]
            <ZoomTools>
                <IconButton $w={30}><Icon w={15} h={15} fill="none" stroke="#fff"><path d="M.5.500h14v14H.500z" /><path d="M4 5h7v5H4z" fill="#fff" /><path d="M2.500 4V2.500H4M11 2.500h1.500V4M12.500 11v1.500H11M4 12.500H2.500V11" /></Icon></IconButton>
                <IconButton $w={30}><Icon w={15} h={15} fill="none" stroke="#fff"><path d="M.5 5V.500H5M10 .500h4.500V5M14.500 10v4.500H10M5 14.500H.500V10M1 1l5 5M14 1L9 6M1 14l5-5M14 14L9 9" /></Icon></IconButton>
                <IconButton $w={24} aria-label="zoom out"><Icon w={9} h={9} fill="#fff"><path d="M0 4h9v1H0z" /></Icon></IconButton>
                <Slider type="range" aria-label="zoom" value={zoom} onChange={(e) => setZoom(e.target.value)} />
                <IconButton $w={10} aria-label="zoom in"><Icon w={9} h={9} fill="#fff"><path d="M0 4h9v1H0zM4 0h1v9H4z" /></Icon></IconButton>
                <span>85%</span>
                <IconButton $w={14}><Caret color="#9aa0ad" /></IconButton>
                <IconButton $w={30}><Icon w={15} h={15} fill="none" stroke="#c9ccd5"><path d="M.5.500h14v14H.500z" strokeDasharray="1 1" /><path d="M3.500 2.500h8v9h-8z" /></Icon></IconButton>
                <IconButton $w={30}><Icon w={15} h={15} fill="none" stroke="#a4a9b5"><path d="M.5.500h14v14H.500zM4.500 2.500h6v10h-6zM2 7.500h11" /></Icon></IconButton>
            </ZoomTools>
        </StatusBar>
    );
}

function Floating() {
    return (
        <>
            <Pointer width="142" height="70" $top={195} $right={349} fill="#ff0b0b">
                <path d="M4 62L120 11.400 113 7.500 137.500 7 119 24.500 122 15.600 5 64.500z" />
            </Pointer>
            <Pointer width="66" height="82" $top={350} $right={129} fill="#ff0b0b">
                <path d="M7 77.500L12 54 17.500 59 58.500 4 61.500 6 21.500 62 27 64z" />
            </Pointer>
            <Activation><strong>激活 Windows</strong>转到“设置”以激活 Windows。</Activation>
            <Notice>
                <Badge><ShieldIcon /></Badge>
                <NoticeTitle>
                    <span>内存已超标，需要</span><em>深度加速</em>
                    <button aria-label="close"><CloseIcon size={10} color="#8a8f9b" /></button>
                </NoticeTitle>
                <NoticeRow>深度加速关闭卡慢进程<button>深度加速</button></NoticeRow>
            </Notice>
            <InputBar>
                <InputLogo>S</InputLogo>
                <span>中</span>
                <Icon w={12} h={12} fill="none" stroke="#0b6fd6" strokeWidth="1.600"><circle cx="3" cy="3" r="2" /><circle cx="9.500" cy="7.500" r="1" /><path d="M10.500 8q0 2-2 3.500" /></Icon>
                <Icon w={13} h={16} fill="#0b6fd6"><rect x="3.500" width="6" height="10" rx="3" /><path d="M1 7q0 5.500 5.500 5.500T12 7" fill="none" stroke="#0b6fd6" strokeWidth="1.600" /><path d="M5 14h3v2H5z" /></Icon>
                <Icon w={16} h={12} fill="#0b6fd6"><rect x=".8" y=".8" width="14.400" height="10.400" rx="1" fill="none" stroke="#0b6fd6" strokeWidth="1.600" /><path d="M3 3h2v2H3zM6 3h2v2H6zM9 3h2v2H9zM12 3h1v2h-1zM3 6h2v1H3zM6 6h2v1H6zM9 6h4v1H9zM4 8h8v1.500H4z" /></Icon>
                <Icon w={14} h={14} fill="#0b6fd6"><rect width="6" height="6" rx="1.500" /><rect x="8.700" y=".7" width="4.600" height="4.600" rx="1.500" fill="none" stroke="#0b6fd6" strokeWidth="1.500" /><rect y="8" width="6" height="6" rx="1.500" /><rect x="8" y="8" width="6" height="6" rx="1.500" /></Icon>
            </InputBar>
            <SiteMark>
                <Icon w={44} h={40}>
                    <path d="M1 30C-2 15 15 1 42 0 25 4 14 10 12 20 10 30 4 34 1 30z" fill="#4da3dc" opacity=".9" />
                    <path d="M14 22C18 11 30 8 38 14c8 12-8 25-34 25 12-3 24-8 26-15 1-6-8-7-16-2z" fill="#3aa35e" opacity=".9" />
                    <path d="M4 39C16 38 26 33 31 26c-2 8-12 14-27 13z" fill="#e6d84a" /><path d="M14 23c2-5 9-7 11-3-1 5-7 7-11 3z" fill="#2f7fc4" />
                </Icon>
                <div>极光下载站<small>www.xz7.com</small></div>
            </SiteMark>
        </>
    );
}

function App() {
    return (
        <Page>
            <GlobalStyle />
            <Header />
            <Main>
                <Workspace />
                <FormatPanel />
            </Main>
            <Status />
            <Floating />
        </Page>
    );
}

export default App;
